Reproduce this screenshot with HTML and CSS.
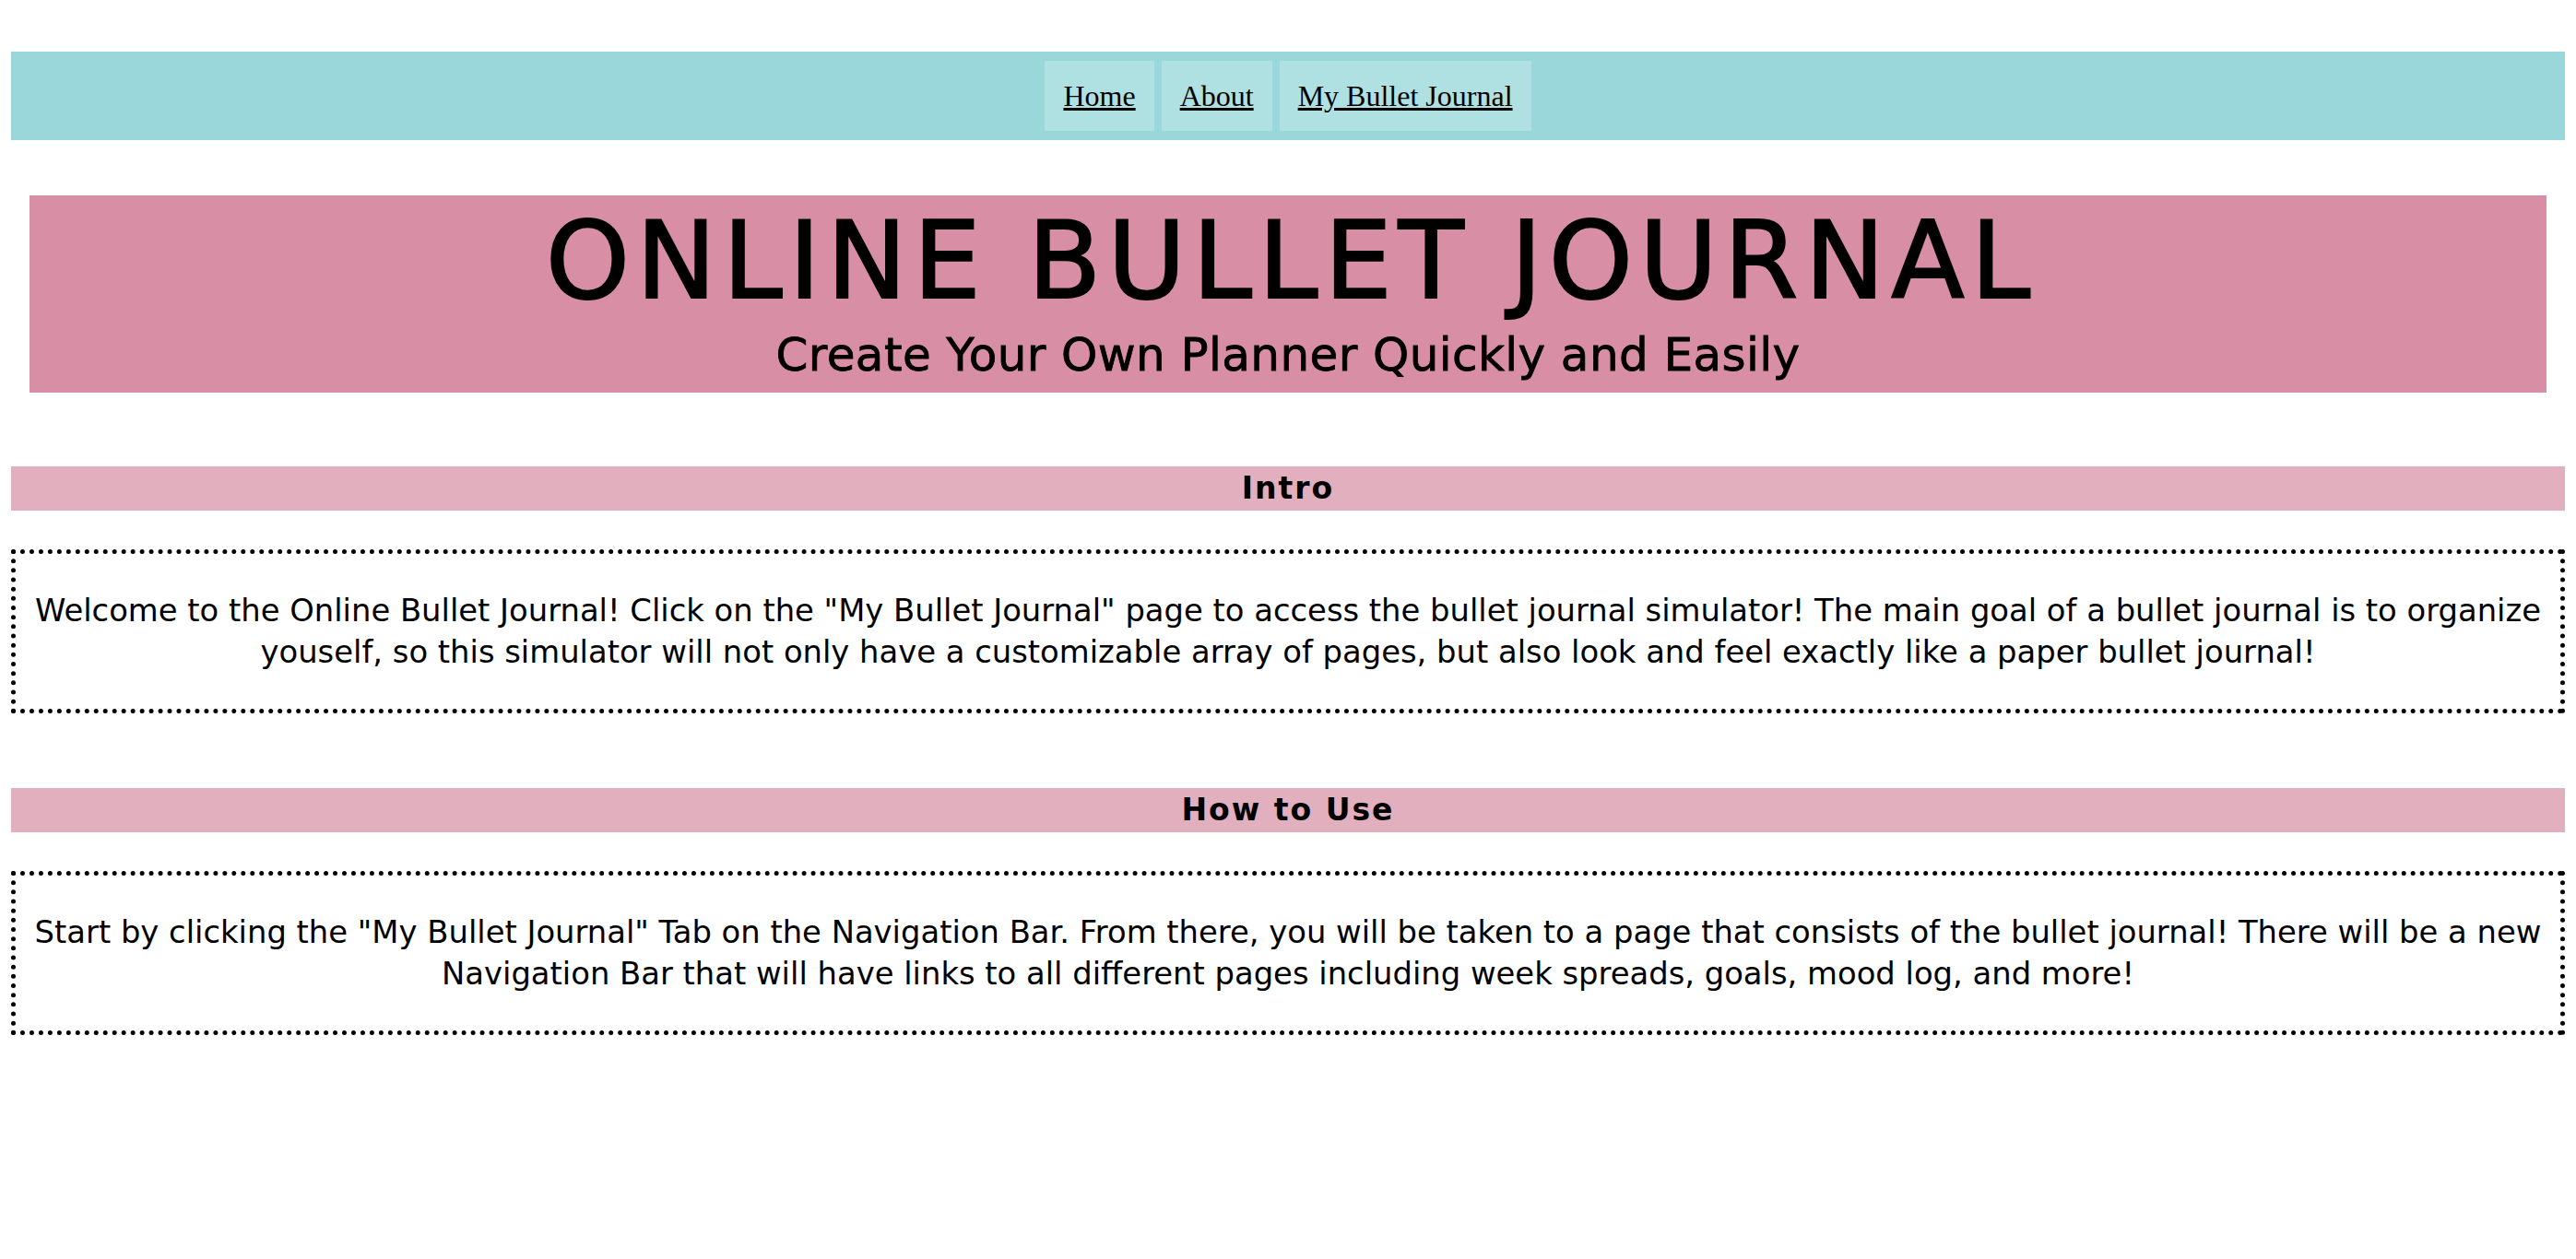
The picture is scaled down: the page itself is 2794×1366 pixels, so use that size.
FILE: index.html
```html
<!DOCTYPE html>
<html lang="en">
<head>
<meta charset="utf-8">
<title>Online Bullet Journal</title>
<link rel="stylesheet" href="styles.css">
</head>
<body>
<nav class="topnav">
  <a class="nav-item" href="#">Home</a>
  <a class="nav-item" href="#">About</a>
  <a class="nav-item" href="#">My Bullet Journal</a>
</nav>

<header class="banner">
  <h1 class="banner-title">ONLINE BULLET JOURNAL</h1>
  <p class="banner-sub">Create Your Own Planner Quickly and Easily</p>
</header>

<section class="section section-intro">
  <h2 class="section-head">Intro</h2>
  <div class="section-box">
    <p class="section-text">Welcome to the Online Bullet Journal! Click on the "My Bullet Journal" page to access the bullet journal simulator! The main goal of a bullet journal is to organize youself, so this simulator will not only have a customizable array of pages, but also look and feel exactly like a paper bullet journal!</p>
  </div>
</section>

<section class="section section-howto">
  <h2 class="section-head">How to Use</h2>
  <div class="section-box">
    <p class="section-text">Start by clicking the "My Bullet Journal" Tab on the Navigation Bar. From there, you will be taken to a page that consists of the bullet journal! There will be a new Navigation Bar that will have links to all different pages including week spreads, goals, mood log, and more!</p>
  </div>
</section>
</body>
</html>
```

FILE: styles.css
```css
html, body {
  margin: 0;
  padding: 0;
  background: #ffffff;
}

body {
  font-family: "DejaVu Sans", "Noto Sans", sans-serif;
  color: #000;
}

.topnav {
  margin: 56px 12px 0;
  padding: 10px;
  background: #9ad7da;
  display: flex;
  justify-content: center;
  gap: 8px;
}

.nav-item {
  display: block;
  padding: 20px;
  background: #afe0e2;
  font-family: "Liberation Serif", "Times New Roman", serif;
  font-size: 32px;
  line-height: 36px;
  color: #000;
  text-decoration: underline;
}

.banner {
  margin: 60px 32px 0;
  padding: 13px 0 11px;
  background: #d88fa6;
  text-align: center;
}

.banner-title {
  margin: 0;
  font-size: 116px;
  line-height: 116px;
  font-weight: normal;
  letter-spacing: 7px;
  padding-left: 7px;
  -webkit-text-stroke: 2px #000;
}

.banner-sub {
  margin: 14px 0 0;
  font-size: 50px;
  line-height: 60px;
  letter-spacing: 0.4px;
  -webkit-text-stroke: 0.8px #000;
}

.section {
  margin: 0 12px;
}

.section-intro {
  margin-top: 80px;
}

.section-howto {
  margin-top: 81px;
}

.section-head {
  margin: 0;
  height: 48px;
  background: #e2afbf;
  text-align: center;
  font-size: 33px;
  line-height: 48px;
  font-weight: bold;
  letter-spacing: 2px;
}

.section-box {
  margin-top: 42px;
  border: 5px dotted #000;
  padding: 39px 2px;
}

.section-text {
  margin: 0;
  text-align: center;
  font-size: 33.8px;
  line-height: 45px;
}
```
